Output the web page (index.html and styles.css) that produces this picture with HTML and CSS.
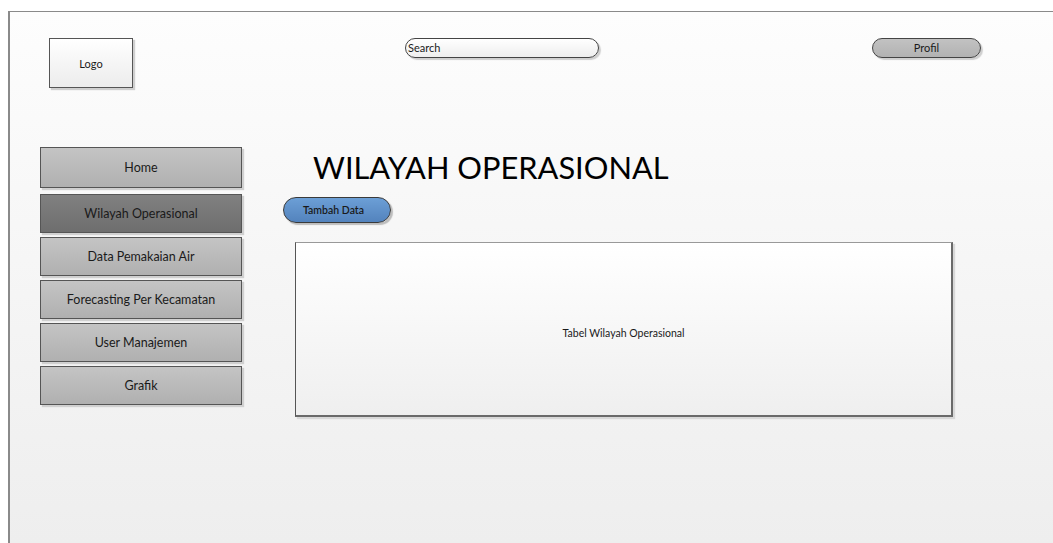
FILE: index.html
```html
<!DOCTYPE html>
<html lang="id">
<head>
<meta charset="utf-8">
<title>Wilayah Operasional</title>
<link rel="stylesheet" href="styles.css">
</head>
<body>
<div class="frame">
  <header class="topbar">
    <div class="logo">Logo</div>
    <div class="search">Search</div>
    <div class="profile">Profil</div>
  </header>
  <div class="layout">
    <nav class="sidebar">
      <a class="nav-item">Home</a>
      <a class="nav-item active">Wilayah Operasional</a>
      <a class="nav-item">Data Pemakaian Air</a>
      <a class="nav-item">Forecasting Per Kecamatan</a>
      <a class="nav-item">User Manajemen</a>
      <a class="nav-item">Grafik</a>
    </nav>
    <main class="content">
      <h1 class="title">WILAYAH OPERASIONAL</h1>
      <button class="add-btn">Tambah Data</button>
      <div class="table-box">Tabel Wilayah Operasional</div>
    </main>
  </div>
</div>
</body>
</html>
```

FILE: styles.css
```css
html, body {
  margin: 0;
  padding: 0;
  background: #ffffff;
  overflow: hidden;
}

body {
  font-family: Lato, "Open Sans", "Liberation Sans", sans-serif;
  color: #1a1a1a;
}

/* canvas frame: only top and left edges are visible in the window */
.frame {
  margin: 11px 0 0 8px;
  width: 1045px;
  height: 532px;
  border-top: 1px solid #8a8a8a;
  border-left: 2px solid #8a8a8a;
  background: linear-gradient(to bottom, #fdfdfd 0%, #eeeeee 100%);
  box-sizing: border-box;
  padding: 26px 0 0 0;
  overflow: hidden;
}

.topbar {
  display: flex;
  align-items: flex-start;
  padding-left: 39px;
}

.logo {
  width: 84px;
  height: 50px;
  box-sizing: border-box;
  border: 1px solid #555;
  background: linear-gradient(to bottom, #ffffff, #ececec);
  box-shadow: 2px 2px 1px #cfcfcf;
  display: flex;
  align-items: center;
  justify-content: center;
  font-size: 11px;
}

.search {
  margin-left: 272px;
  width: 194px;
  height: 20px;
  box-sizing: border-box;
  border: 1px solid #444;
  border-radius: 10px;
  background: linear-gradient(to bottom, #ffffff, #eeeeee);
  box-shadow: 2px 2px 1px #cfcfcf;
  font-size: 11px;
  line-height: 18px;
  padding-left: 2px;
}

.profile {
  margin-left: 273px;
  width: 109px;
  height: 20px;
  box-sizing: border-box;
  border: 1px solid #444;
  border-radius: 10px;
  background: linear-gradient(to bottom, #c2c2c2, #b2b2b2);
  box-shadow: 2px 2px 1px #cfcfcf;
  font-size: 11px;
  line-height: 18px;
  text-align: center;
}

.layout {
  display: flex;
  align-items: flex-start;
  margin-top: 59px;
  padding-left: 30px;
}

.sidebar {
  display: flex;
  flex-direction: column;
  gap: 4px;
  width: 202px;
}

.nav-item {
  display: flex;
  align-items: center;
  justify-content: center;
  height: 39px;
  box-sizing: border-box;
  border: 1px solid #555;
  background: linear-gradient(to bottom, #c4c4c4, #b0b0b0);
  box-shadow: 2px 2px 1px #d0d0d0;
  font-size: 12.5px;
  color: #1a1a1a;
}

.nav-item:first-child {
  height: 41px;
  margin-bottom: 2px;
}

.nav-item.active {
  background: linear-gradient(to bottom, #808080, #6e6e6e);
}

.content {
  margin-left: 41px;
  display: flex;
  flex-direction: column;
  align-items: flex-start;
}

.title {
  margin: 1px 0 0 30px;
  font-weight: 400;
  font-size: 30.8px;
  line-height: 40px;
  color: #000;
}

.add-btn {
  margin-top: 9px;
  width: 108px;
  height: 26px;
  box-sizing: border-box;
  border: 1px solid #3a3a3a;
  border-radius: 13px;
  background: linear-gradient(to bottom, #6c9fd6, #5383bd);
  box-shadow: 2px 2px 1px #bdbdbd;
  font-family: inherit;
  font-size: 10.5px;
  font-weight: 600;
  color: #1a1a1a;
  text-align: left;
  padding: 0 0 0 19px;
}

.table-box {
  margin: 19px 0 0 12px;
  width: 658px;
  height: 175px;
  box-sizing: border-box;
  border: 1px solid #555;
  border-top-color: #999;
  border-right: 2px solid #6a6a6a;
  border-bottom: 2px solid #6a6a6a;
  background: linear-gradient(to bottom, #ffffff, #efefef);
  box-shadow: 2px 2px 1px #d8d8d8;
  display: flex;
  align-items: center;
  justify-content: center;
  font-size: 10.5px;
  padding-top: 8px;
}
```
